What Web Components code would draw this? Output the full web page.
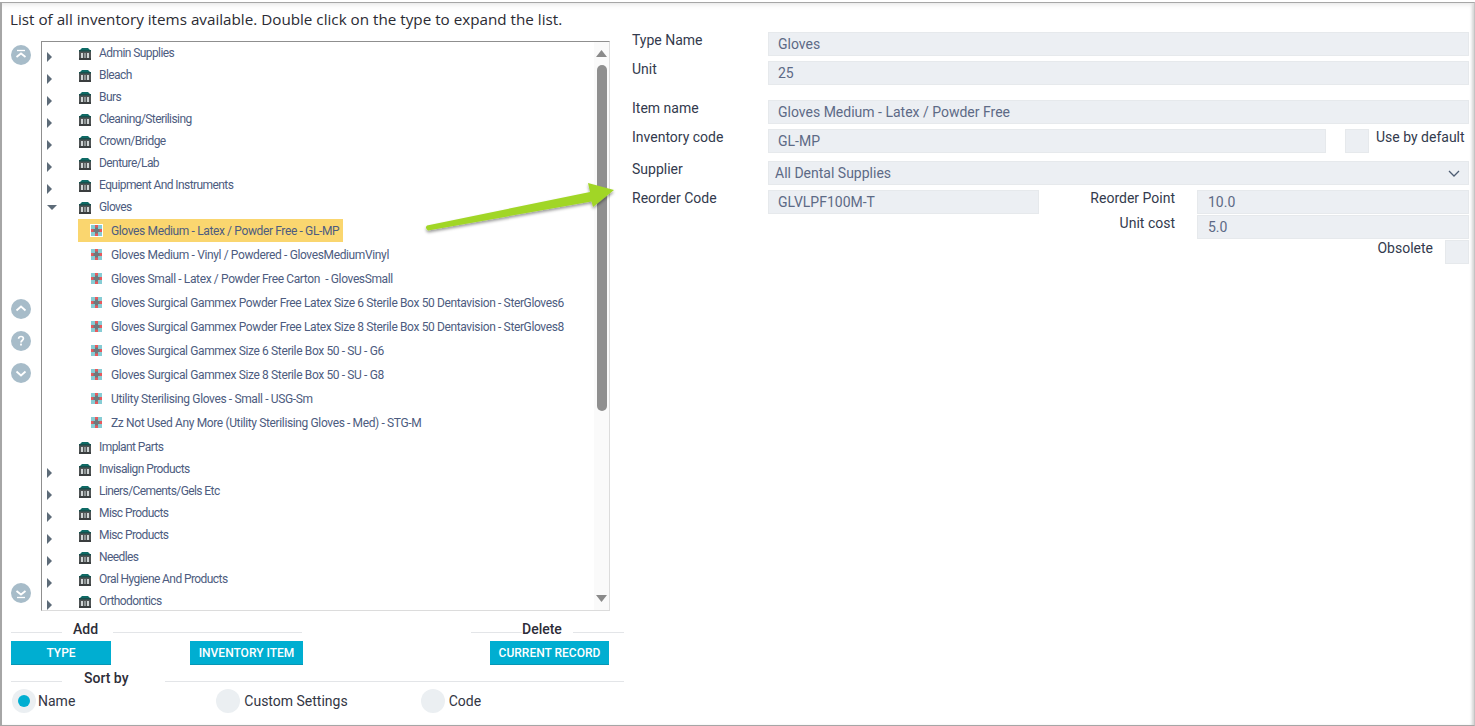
<!DOCTYPE html>
<html><head><meta charset="utf-8"><title>Inventory</title>
<style>
html,body{margin:0;padding:0;background:#fff;height:726px;overflow:hidden}
body{font-family:Roboto,"Liberation Sans",sans-serif}
</style></head><body>
<app-frame>
  <div slot="head">List of all inventory items available. Double click on the type to expand the list.</div>
  <side-rail slot="rail"></side-rail>
  <tree-view slot="tree">
    <tree-group>Admin Supplies</tree-group>
    <tree-group>Bleach</tree-group>
    <tree-group>Burs</tree-group>
    <tree-group>Cleaning/Sterilising</tree-group>
    <tree-group>Crown/Bridge</tree-group>
    <tree-group>Denture/Lab</tree-group>
    <tree-group>Equipment And Instruments</tree-group>
    <tree-group state="open">Gloves</tree-group>
    <tree-items>
      <tree-item selected>Gloves Medium - Latex / Powder Free - GL-MP</tree-item>
      <tree-item>Gloves Medium - Vinyl / Powdered - GlovesMediumVinyl</tree-item>
      <tree-item>Gloves Small - Latex / Powder Free Carton  - GlovesSmall</tree-item>
      <tree-item>Gloves Surgical Gammex Powder Free Latex Size 6 Sterile Box 50 Dentavision - SterGloves6</tree-item>
      <tree-item>Gloves Surgical Gammex Powder Free Latex Size 8 Sterile Box 50 Dentavision - SterGloves8</tree-item>
      <tree-item>Gloves Surgical Gammex Size 6 Sterile Box 50 - SU - G6</tree-item>
      <tree-item>Gloves Surgical Gammex Size 8 Sterile Box 50 - SU - G8</tree-item>
      <tree-item>Utility Sterilising Gloves - Small - USG-Sm</tree-item>
      <tree-item>Zz Not Used Any More (Utility Sterilising Gloves - Med) - STG-M</tree-item>
    </tree-items>
    <tree-group state="leaf">Implant Parts</tree-group>
    <tree-group>Invisalign Products</tree-group>
    <tree-group>Liners/Cements/Gels Etc</tree-group>
    <tree-group>Misc Products</tree-group>
    <tree-group>Misc Products</tree-group>
    <tree-group>Needles</tree-group>
    <tree-group>Oral Hygiene And Products</tree-group>
    <tree-group>Orthodontics</tree-group>
  </tree-view>
  <action-bar slot="actions"></action-bar>
  <sort-bar slot="sort"></sort-bar>
  <inventory-form slot="form"></inventory-form>
  <sketch-arrow slot="overlay"></sketch-arrow>
</app-frame>
<script>
function def(name, html, init){
  customElements.define(name, class extends HTMLElement{
    constructor(){super();this.attachShadow({mode:'open'}).innerHTML=html;}
    connectedCallback(){ if(init) init(this); }
  });
}
def('app-frame',`<style>
:host{display:block;box-sizing:border-box;height:724px;margin-top:2px;border-top:1px solid #a6a6a6;border-left:2px solid #a6a6a6;border-bottom:1px solid #a6a6a6;border-right:1px solid #c4c4c4;position:relative;box-shadow:inset 0 6px 6px -5px #e4e4e4,inset -3px 0 3px -1px #d4d4d4;overflow:hidden}
.wrap{display:flex;height:100%}
.left{width:630px;flex:none;padding-left:9px;box-sizing:border-box}
.head{font:15.23px/20px "Open Sans",sans-serif;color:#2b2b33;margin:6px 0 12px -1px;white-space:nowrap}
.mid{display:flex}
.tree{margin-left:10px}
.right{flex:1;padding-top:29px;min-width:0}
</style><div class="wrap"><div class="left"><div class="head"><slot name="head"></slot></div>
<div class="mid"><slot name="rail"></slot><div class="tree"><slot name="tree"></slot></div></div>
<slot name="actions"></slot><slot name="sort"></slot></div>
<div class="right"><slot name="form"></slot></div></div><slot name="overlay"></slot>`);

const chevUp='<path d="M5.5 11.5 10 7.5l4.5 4" />', chevDn='<path d="M5.5 8.5 10 12.5l4.5-4" />';
def('round-btn',`<style>:host{display:block;width:20px;height:20px;border-radius:50%;background:#a7bcc9}svg{display:block}</style><svg id="s" width="20" height="20" viewBox="0 0 20 20" fill="none" stroke="#fff" stroke-width="1.8"></svg>`,
el=>{const k=el.getAttribute('kind');const s=el.shadowRoot.getElementById('s');
 s.innerHTML={top:'<path d="M6 5.5h8" stroke-width="1.3"/><path d="M5.5 12 10 8.5l4.5 3.5"/>',bottom:'<path d="M6 14.5h8" stroke-width="1.3"/><path d="M5.5 8 10 11.5 14.5 8"/>',up:chevUp,down:chevDn,
 help:'<path d="M7.6 7.8c0-1.5 1.1-2.3 2.4-2.3s2.4.8 2.4 2.1c0 1.9-2.4 1.9-2.4 3.8" stroke-width="1.7"/><rect x="9.1" y="12.6" width="1.8" height="1.9" fill="#fff" stroke="none"/>'}[k];});
def('side-rail',`<style>:host{display:flex;flex-direction:column;width:20px;height:558px;margin-top:4px}
.g{display:flex;flex-direction:column;gap:12px;margin-top:234px}.b{margin-top:auto}</style>
<round-btn kind="top"></round-btn><div class="g"><round-btn kind="up"></round-btn><round-btn kind="help"></round-btn><round-btn kind="down"></round-btn></div><round-btn class="b" kind="bottom"></round-btn>`);

def('tree-view',`<style>:host{display:flex;box-sizing:border-box;width:569px;height:570px;border:1px solid #dcdcdc;border-top-color:#8f8f8f;border-left-color:#8f8f8f;overflow:hidden;font:12px/16px Roboto,sans-serif;color:#4d5c80}
.c{flex:1;min-width:0;overflow:hidden}
.sb{width:15px;flex:none;background:#fafafa;display:flex;flex-direction:column;align-items:center;box-sizing:border-box;padding-top:8px;}
.sb i{display:block;width:10px;height:346px;margin:8px 0 auto;background:#8f8f8f;border-radius:5px}
.sb svg{display:block;flex:none}
.sb svg:last-child{margin-bottom:8px}
</style><div class="c"><slot></slot></div><div class="sb"><svg width="11" height="7"><path d="M5.5 0 11 7H0z" fill="#8a8a8a"/></svg><i></i><svg width="11" height="7"><path d="M0 0h11L5.5 7z" fill="#8a8a8a"/></svg></div>`);

const bank='<svg width="12" height="13" viewBox="0 0 12 13"><path d="M.5 3.5 3 1h6l2.500 2.500z" fill="#0f6b66"/><rect x="0" y="3" width="12" height="10" fill="#4f5354"/><rect x="0" y="3" width="12" height="1.500" fill="#17504d"/><rect x="2" y="6" width="2" height="5" fill="#cfd4d4"/><rect x="5" y="6" width="2" height="5" fill="#8f9696"/><rect x="8" y="6" width="2" height="5" fill="#cfd4d4"/><rect x="0" y="11" width="12" height="2" fill="#3a3e3f"/></svg>';
const cross='<svg width="13" height="13" viewBox="0 0 13 13"><rect width="13" height="13" fill="#fff"/><rect x="1" y="1" width="4" height="4" fill="#86ccd4"/><rect x="8" y="1" width="4" height="4" fill="#86ccd4"/><rect x="1" y="8" width="4" height="4" fill="#86ccd4"/><rect x="8" y="8" width="4" height="4" fill="#86ccd4"/><rect x="5" y="1" width="3" height="11" fill="#e6585c"/><rect x="1" y="5" width="11" height="3" fill="#e6585c"/><path d="M5 3.500h3V5h1.500v3H8v1.500H5V8H3.500V5H5z" fill="#6f787c"/></svg>';
def('tree-group',`<style>:host{display:flex;height:22px;align-items:center;white-space:pre;letter-spacing:-.58px}
.a{width:37px;flex:none;height:22px;position:relative}
svg{display:block;flex:none}
.a svg{position:absolute;left:5px;top:10px}
.i{margin-right:8px}
</style><span class="a" id="a"></span><span class="i">${bank}</span><span><slot></slot></span>`,
el=>{const st=el.getAttribute('state');const a=el.shadowRoot.getElementById('a');
 if(st==='open')a.innerHTML='<svg style="left:5px;top:9px" width="10" height="5"><path d="M0 0h10L5 5z" fill="#5d6b78"/></svg>';
 else if(st!=='leaf')a.innerHTML='<svg width="5" height="10"><path d="M0 0l5 5-5 5z" fill="#5d6b78"/></svg>';});
def('tree-items',`<style>:host{display:block;margin:1px 0}</style><slot></slot>`);
def('tree-item',`<style>:host{display:block;height:24px;padding-left:36px;white-space:pre;box-sizing:border-box;letter-spacing:-.37px}
.r{display:inline-flex;align-items:center;height:23px;padding:0 4px 0 12px}
:host([selected]) .r{background:#fad66f}
svg{display:block}.i{margin-right:8px;height:13px}
</style><span class="r"><span class="i">${cross}</span><slot></slot></span>`);

def('legend-line',`<style>:host{display:flex;align-items:flex-start;font:500 14px/16px Roboto,sans-serif;color:#2d2d38;height:16px}
.l{height:0;border-top:1px solid #e3e5e8;margin-top:11px}
.b{flex:1}
.a{width:var(--pre,51px)}
.t{margin:0 var(--gap-r,15px) 0 var(--gap-l,11px);white-space:nowrap}
</style><span class="l a"></span><span class="t"><slot></slot></span><span class="l b"></span>`);
def('flat-button',`<style>:host{display:flex;box-sizing:border-box;height:24px;align-items:center;justify-content:center;background:#00aed1;border-bottom:1px solid #0796b4;color:#fff;font:500 12px/16px Roboto,sans-serif;white-space:nowrap}</style><slot></slot>`);
def('action-bar',`<style>:host{display:block;margin-top:10px;width:613px}
.top{display:flex;justify-content:space-between}
.add{width:291px;--pre:51px;--gap-l:11px;--gap-r:15px}
.del{width:153px;--pre:51px;--gap-l:0px;--gap-r:11px}
.btns{display:flex;margin-top:4px}
.t{width:100px}.i{width:113px;margin-left:79px}.c{width:119px;margin-left:187px}
</style><div class="top"><legend-line class="add">Add</legend-line><legend-line class="del">Delete</legend-line></div>
<div class="btns"><flat-button class="t">TYPE</flat-button><flat-button class="i">INVENTORY ITEM</flat-button><flat-button class="c">CURRENT RECORD</flat-button></div>`);
def('radio-opt',`<style>:host{display:flex;align-items:center;gap:2px;font:14px/16px Roboto,sans-serif;color:#333644}
.c{width:24px;height:24px;border-radius:50%;background:#ebeff2;display:flex;align-items:center;justify-content:center;flex:none}
.d{display:none;width:12px;height:12px;border-radius:50%;background:#00aed1}
:host([checked]) .d{display:block}
.l{margin-left:var(--lm,0)}
</style><span class="c"><span class="d"></span></span><span class="l"><slot></slot></span>`);
def('sort-bar',`<style>:host{display:block;margin-top:5px;width:613px}
.ll{--pre:51px;--gap-l:22px;--gap-r:36px}
.r{display:flex;margin-top:3px;padding-left:1px}
.b{margin-left:141px;--lm:2px}.c{margin-left:73px;--lm:2px}
</style><legend-line class="ll">Sort by</legend-line><div class="r"><radio-opt checked>Name</radio-opt><radio-opt class="b">Custom Settings</radio-opt><radio-opt class="c">Code</radio-opt></div>`);

def('form-label',`<style>:host{display:block;font:14px/16px Roboto,sans-serif;color:#333a4d;white-space:nowrap}</style><slot></slot>`);
def('text-box',`<style>:host{display:flex;box-sizing:border-box;height:24px;align-items:center;background:#eceff3;border:1px solid #e6e9ec;font:14px/16px Roboto,sans-serif;color:#5d6a86;padding-left:9px;white-space:nowrap;min-width:0}
:host([select]){padding-left:6px;justify-content:space-between;padding-right:8px}
svg{display:none}:host([select]) svg{display:block}
</style><span><slot></slot></span><svg width="12" height="7" viewBox="0 0 12 7" fill="none" stroke="#4d5c72" stroke-width="1.3"><path d="M1 1l5 5 5-5"/></svg>`);
def('check-box',`<style>:host{display:block;box-sizing:border-box;width:24px;height:24px;background:#eceff3;border:1px solid #e6e9ec;flex:none}</style>`);
def('inventory-form',`<style>:host{display:block;width:837px}
.row{display:grid;grid-template-columns:136px 1fr;height:24px}
.cv{display:flex}
.cv text-box{flex:1}
.ud{display:flex;margin-left:19px;flex:none;width:124px}
.ud form-label{margin-left:7px}
.half{display:flex}
.half>text-box:first-child{width:271px;flex:none}
.pts{display:flex;flex-direction:column;flex:1;gap:1px}
.pt{display:grid;grid-template-columns:136px 1fr;column-gap:22px;height:24px}
.pt form-label{text-align:right}
.pt text-box{padding-left:10px}
.ob{display:flex;justify-content:flex-end;gap:12px;height:24px}
.m5{margin-top:5px}.m15{margin-top:15px}.m8{margin-top:8px}
</style>
<div class="row"><form-label>Type Name</form-label><text-box>Gloves</text-box></div>
<div class="row m5"><form-label>Unit</form-label><text-box>25</text-box></div>
<div class="row m15"><form-label>Item name</form-label><text-box>Gloves Medium - Latex / Powder Free</text-box></div>
<div class="row m5"><form-label>Inventory code</form-label><div class="cv"><text-box>GL-MP</text-box><div class="ud"><check-box></check-box><form-label>Use by default</form-label></div></div></div>
<div class="row m8"><form-label>Supplier</form-label><text-box select>All Dental Supplies</text-box></div>
<div class="row m5" style="height:auto"><form-label>Reorder Code</form-label><div class="half"><text-box style="height:24px">GLVLPF100M-T</text-box><div class="pts">
<div class="pt"><form-label>Reorder Point</form-label><text-box>10.0</text-box></div>
<div class="pt"><form-label>Unit cost</form-label><text-box>5.0</text-box></div>
<div class="ob"><form-label>Obsolete</form-label><check-box></check-box></div>
</div></div></div>`);
def('sketch-arrow',`<style>:host{position:absolute;left:-2px;top:-3px;width:1475px;height:300px;pointer-events:none;display:block}svg{display:block;overflow:visible}</style>
<svg width="1475" height="300"><defs><filter id="f" x="-10%" y="-30%" width="120%" height="180%"><feDropShadow dx="0" dy="2" stdDeviation="1.6" flood-color="#000" flood-opacity=".4"/></filter></defs>
<path filter="url(#f)" d="M427 225.5 590 192 588 183 614 190 593 207 591.5 201.5 428 230.5Q424.5 228 427 225.5z" fill="#a1d628"/></svg>`);
</script>
</body></html>
